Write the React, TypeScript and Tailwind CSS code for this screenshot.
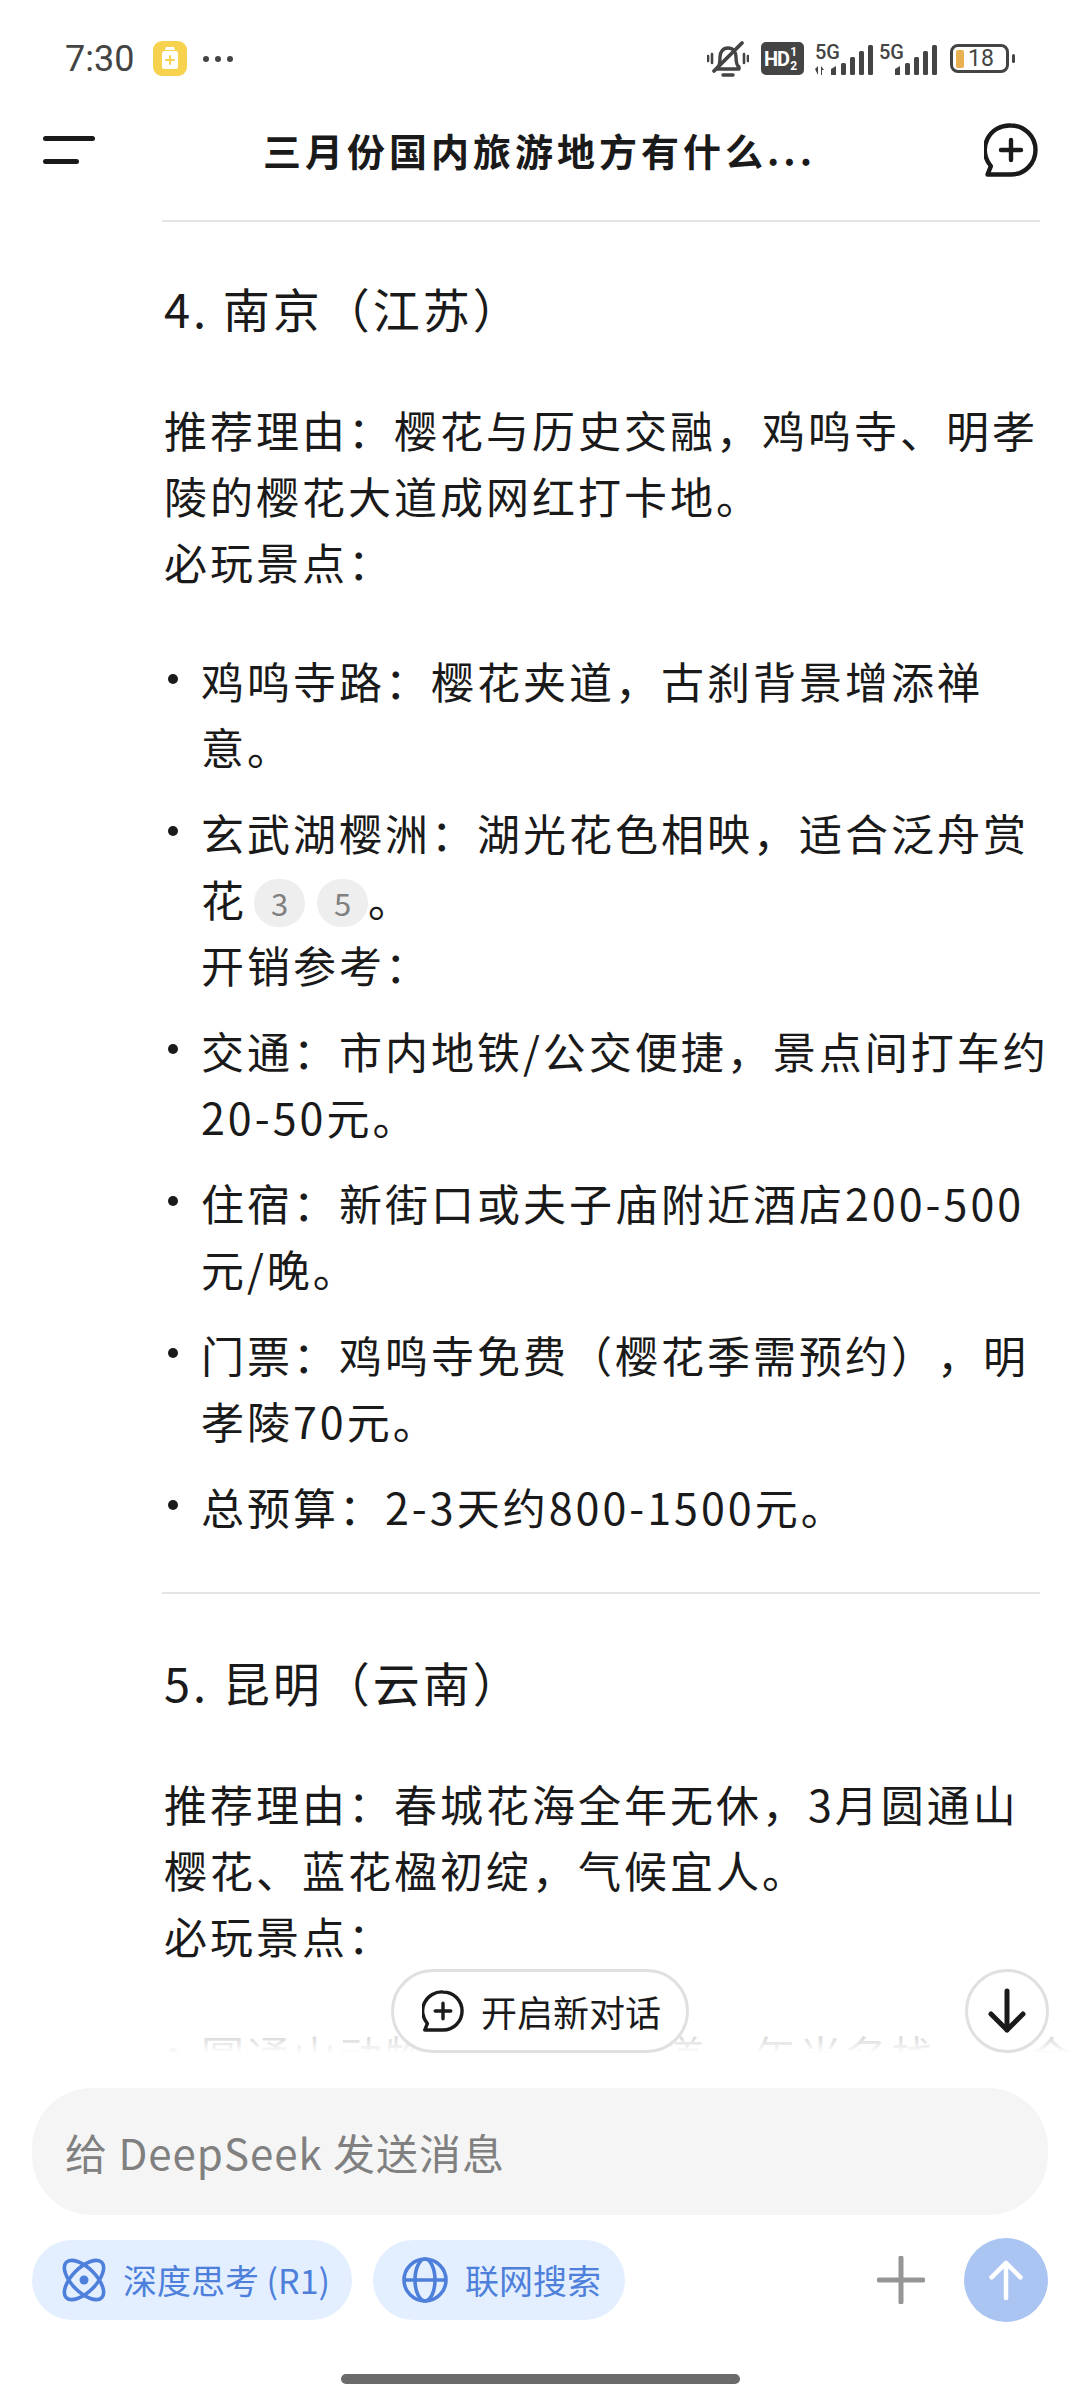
import type React from "react"

const FONT = "font-['Noto_Sans_CJK_SC','Noto_Sans',sans-serif]"

function BubblePlus({ className = "" }: { className?: string }) {
  return (
    <svg viewBox="0 0 54 54" fill="none" className={className}>
      <path
        d="M27 2.5a24.5 24.5 0 0 1 0 49H3.5l3.4-8.4A24.5 24.5 0 0 1 27 2.5Z"
        stroke="#1a1a1a"
        strokeWidth="4.4"
        strokeLinejoin="round"
      />
      <path d="M27 17v20M17 27h20" stroke="#1a1a1a" strokeWidth="4.4" strokeLinecap="round" />
    </svg>
  )
}

function Signal({ withArrows = false }: { withArrows?: boolean }) {
  return (
    <svg viewBox="0 0 58 32" className="h-[32px] w-[58px]">
      <text x="0" y="16" fontSize="20" fontWeight="500" fill="#444" fontFamily="Roboto, sans-serif">
        5G
      </text>
      {withArrows && <path d="M0 26l3-3v9zM6 23l3 4H7v5H6z" fill="#444" />}
      <path d="M16 26l5-3v9h-5z" fill="#444" />
      <rect x="26" y="20" width="5" height="12" rx="1.5" fill="#444" />
      <rect x="35" y="14" width="5" height="18" rx="1.5" fill="#444" />
      <rect x="44" y="8" width="5" height="24" rx="1.5" fill="#444" />
      <rect x="53" y="2" width="5" height="30" rx="1.5" fill="#444" />
    </svg>
  )
}

function StatusBar() {
  return (
    <div className="h-[100px] flex items-center justify-between pl-[65px] pr-[65px] pt-[17px]">
      <div className="flex items-center">
        <span className="font-['Roboto',sans-serif] text-[36px] leading-none text-[#444]">7:30</span>
        <div className="ml-[19px] w-[34px] h-[35px] rounded-[9px] bg-[#f6d24f] flex items-center justify-center">
          <svg viewBox="0 0 34 35" className="w-[34px] h-[35px]">
            <path d="M13 6h8l1 3h-10z" fill="#fff" />
            <rect x="9" y="10" width="16" height="18" rx="2.5" fill="#fff" />
            <path d="M17 15v8M13 19h8" stroke="#f6d24f" strokeWidth="2" strokeLinecap="round" />
          </svg>
        </div>
        <div className="ml-[16px] flex gap-[6px]">
          <span className="w-[6px] h-[6px] rounded-full bg-[#444]" />
          <span className="w-[6px] h-[6px] rounded-full bg-[#444]" />
          <span className="w-[6px] h-[6px] rounded-full bg-[#444]" />
        </div>
      </div>
      <div className="flex items-center">
        <svg viewBox="0 0 42 38" fill="none" stroke="#444" className="w-[42px] h-[38px]">
          <path
            d="M11 27c2-2 2-6 2-10 0-5 3-9 8-9s8 4 8 9c0 4 0 8 3 10v2H10z"
            strokeWidth="3.4"
            strokeLinejoin="round"
          />
          <path d="M35 3L7 31" strokeWidth="3.8" strokeLinecap="round" />
          <path d="M16 35h10" strokeWidth="3.4" strokeLinecap="round" />
          <path d="M5 14v9M1 16v5M37 14v9M41 16v5" strokeWidth="2.6" strokeLinecap="round" />
        </svg>
        <div className="ml-[12px] w-[43px] h-[33px] rounded-[5px] bg-[#444] flex items-center pl-[3px] text-white font-['Roboto',sans-serif] font-bold">
          <span className="text-[20px] leading-none tracking-[-1px]">HD</span>
          <span className="ml-[1px] flex flex-col text-[12px] leading-[14px] text-center">
            <span>1</span>
            <span>2</span>
          </span>
        </div>
        <div className="ml-[11px]">
          <Signal withArrows />
        </div>
        <div className="ml-[6px]">
          <Signal />
        </div>
        <div className="ml-[13px] w-[59px] h-[29px] rounded-[8px] border-[3px] border-[#444] flex items-center pl-[3px]">
          <span className="w-[8px] h-[18px] rounded-[2px] bg-[#e8b04f]" />
          <span className="ml-[4px] font-['Roboto',sans-serif] text-[23px] leading-none text-[#444]">18</span>
        </div>
        <span className="ml-[3px] w-[3px] h-[9px] rounded-full bg-[#444]" />
      </div>
    </div>
  )
}

function Header() {
  return (
    <div className="h-[100px] flex items-center justify-between pl-[43px] pr-[42px]">
      <div className="flex flex-col gap-[18px]">
        <span className="block w-[52px] h-[5px] rounded-full bg-[#1a1a1a]" />
        <span className="block w-[36px] h-[5px] rounded-full bg-[#1a1a1a]" />
      </div>
      <h1 className="text-[38px] leading-none font-bold tracking-[4px] text-[#1a1a1a]">三月份国内旅游地方有什么...</h1>
      <BubblePlus className="w-[54px] h-[54px]" />
    </div>
  )
}

function Cite({ n }: { n: number }) {
  return (
    <span className="inline-flex items-center justify-center w-[51px] h-[48px] mr-[12px] rounded-full bg-[#eeeeee] text-[31px] leading-none tracking-normal text-[#808080] align-[1px]">
      {n}
    </span>
  )
}

function Li({ children }: { children: React.ReactNode }) {
  return (
    <li className="relative pl-[37px]">
      <span className="absolute left-[4px] top-[27px] w-[10px] h-[10px] rounded-full bg-[#1a1a1a]" />
      {children}
    </li>
  )
}

function Content() {
  return (
    <div className="pl-[164px] pr-[10px] text-[43px] leading-[66px] tracking-[3px] text-[#1a1a1a] whitespace-nowrap [text-spacing-trim:space-all]">
      <hr className="mt-[20px] -ml-[2px] mr-[30px] border-t-2 border-[#e5e5e5]" />
      <h2 className="mt-[53px] text-[47px] tracking-[3px]">4. 南京（江苏）</h2>
      <p className="mt-[55px]">
        推荐理由：樱花与历史交融，鸡鸣寺、明孝
        <br />
        陵的樱花大道成网红打卡地。
        <br />
        必玩景点：
      </p>
      <ul className="mt-[53px] flex flex-col gap-[20px]">
        <Li>
          鸡鸣寺路：樱花夹道，古刹背景增添禅
          <br />
          意。
        </Li>
        <Li>
          玄武湖樱洲：湖光花色相映，适合泛舟赏
          <br />
          花
          <span className="inline-block w-[7px]" />
          <Cite n={3} />
          <Cite n={5} />
          <span className="-ml-[12px]">。</span>
          <br />
          开销参考：
        </Li>
        <Li>
          交通：市内地铁/公交便捷，景点间打车约
          <br />
          20-50元。
        </Li>
        <Li>
          住宿：新街口或夫子庙附近酒店200-500
          <br />
          元/晚。
        </Li>
        <Li>
          门票：鸡鸣寺免费（樱花季需预约），明
          <br />
          孝陵70元。
        </Li>
        <Li>总预算：2-3天约800-1500元。</Li>
      </ul>
      <hr className="mt-[53px] -ml-[2px] mr-[30px] border-t-2 border-[#e5e5e5]" />
      <h2 className="mt-[55px] text-[47px] tracking-[3px]">5. 昆明（云南）</h2>
      <p className="mt-[55px]">
        推荐理由：春城花海全年无休，3月圆通山
        <br />
        樱花、蓝花楹初绽，气候宜人。
        <br />
        必玩景点：
      </p>
      <ul className="mt-[53px]">
        <Li>
          圆通山动物园：樱花大道，年当名栈，适合
          <br />
          踏青赏花。
        </Li>
      </ul>
    </div>
  )
}

function Footer() {
  return (
    <div className="relative bg-white">
      <div className="absolute -top-[84px] left-[391px] w-[298px] h-[84px] rounded-full border-[3px] border-[#e0e0e0] bg-white flex items-center pl-[28px] text-[36px] leading-none text-[#1a1a1a]">
        <BubblePlus className="w-[42px] h-[42px]" />
        <span className="ml-[17px]">开启新对话</span>
      </div>
      <div className="absolute -top-[84px] left-[965px] w-[84px] h-[84px] rounded-full border-[3px] border-[#e0e0e0] bg-white flex items-center justify-center">
        <svg viewBox="0 0 40 46" fill="none" stroke="#1a1a1a" strokeWidth="5" strokeLinecap="round" strokeLinejoin="round" className="w-[40px] h-[46px]">
          <path d="M20 3v39M4 26l16 16 16-16" />
        </svg>
      </div>

      <div className="pt-[35px] px-[32px]">
        <div className="h-[127px] rounded-[60px] bg-[#f5f5f5] flex items-center pl-[33px] text-[42px] tracking-[1px] leading-none text-[#808080]">
          给 DeepSeek 发送消息
        </div>
        <div className="mt-[23px] flex items-center">
          <div className="h-[80px] w-[320px] rounded-full bg-[#e3efff] flex items-center pl-[30px] text-[34px] leading-none text-[#4d7fdb]">
            <svg viewBox="0 0 44 44" fill="none" stroke="#4d7fdb" strokeWidth="3.6" className="w-[44px] h-[44px] shrink-0 overflow-visible">
              <ellipse cx="22" cy="22" rx="25" ry="12" transform="rotate(45 22 22)" />
              <ellipse cx="22" cy="22" rx="25" ry="12" transform="rotate(-45 22 22)" />
              <circle cx="22" cy="22" r="4.5" fill="#4d7fdb" stroke="none" />
            </svg>
            <span className="ml-[17px] whitespace-nowrap">深度思考 (R1)</span>
          </div>
          <div className="ml-[21px] h-[80px] w-[252px] rounded-full bg-[#e3efff] flex items-center pl-[29px] text-[34px] leading-none text-[#4d7fdb]">
            <svg viewBox="0 0 46 46" fill="none" stroke="#4d7fdb" strokeWidth="3.6" className="w-[46px] h-[46px] shrink-0">
              <circle cx="23" cy="23" r="21" />
              <ellipse cx="23" cy="23" rx="10" ry="21" />
              <path d="M2 23h42" />
            </svg>
            <span className="ml-[17px] whitespace-nowrap">联网搜索</span>
          </div>
          <svg viewBox="0 0 48 48" fill="none" stroke="#969696" strokeWidth="5" strokeLinecap="round" className="ml-auto mr-[39px] w-[48px] h-[48px]">
            <path d="M24 2v44M2 24h44" />
          </svg>
          <div className="w-[84px] h-[84px] rounded-full bg-[#abc5f2] flex items-center justify-center">
            <svg viewBox="0 0 40 46" fill="none" stroke="#fff" strokeWidth="5" strokeLinecap="round" strokeLinejoin="round" className="w-[36px] h-[44px]">
              <path d="M20 43V4M4 20L20 4l16 16" />
            </svg>
          </div>
        </div>
      </div>
      <div className="mt-[52px] mb-[16px] mx-auto w-[399px] h-[10px] rounded-full bg-[#6b6b6b]" />
    </div>
  )
}

export default function App() {
  return (
    <div className={`w-[1080px] h-[2400px] flex flex-col overflow-hidden bg-white ${FONT}`}>
      <StatusBar />
      <Header />
      <div className="relative flex-1 overflow-hidden">
        <Content />
        <div className="absolute inset-x-0 bottom-0 h-[30px] bg-gradient-to-b from-white/70 to-white" />
      </div>
      <Footer />
    </div>
  )
}
